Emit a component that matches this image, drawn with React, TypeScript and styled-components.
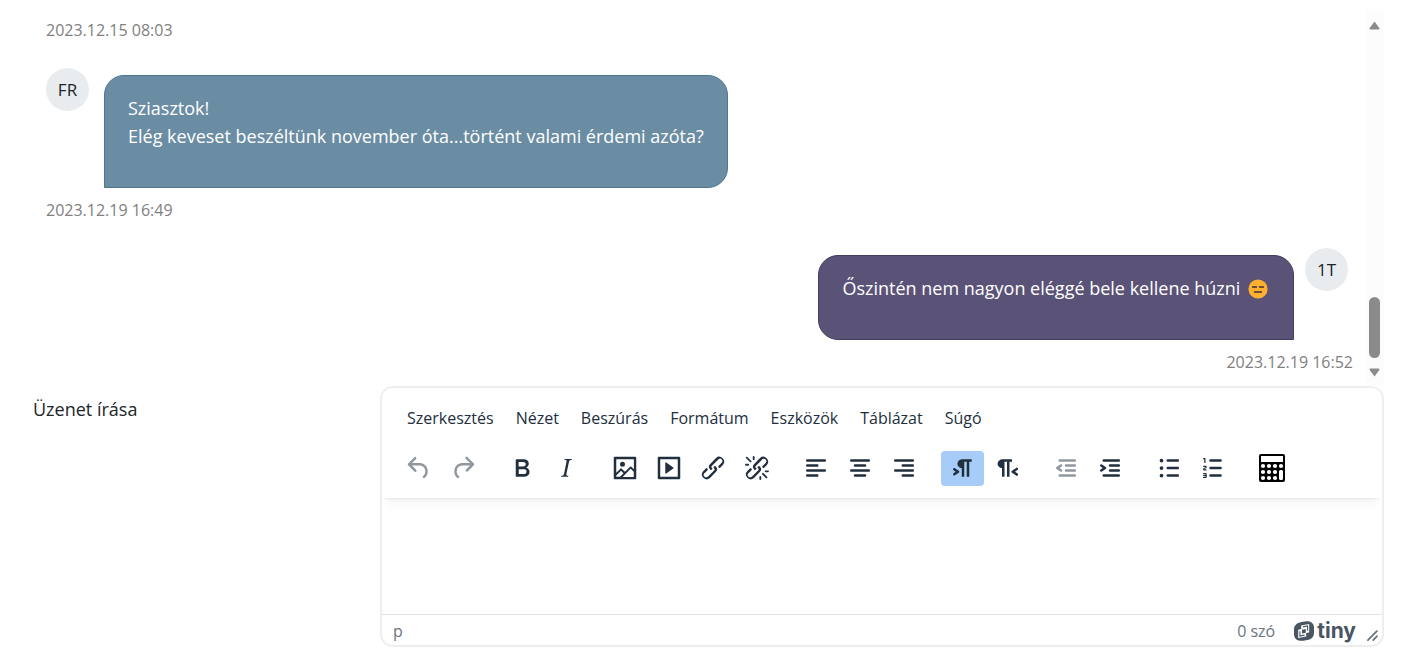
import React from 'react';
import styled, { createGlobalStyle } from 'styled-components';

const GlobalStyle = createGlobalStyle`
  *, *::before, *::after { box-sizing: border-box; }
  body {
    margin: 0;
    background: #fff;
    color: #212529;
    font-family: 'Open Sans', 'Noto Sans', sans-serif;
    font-size: 18px;
    line-height: 28px;
  }
  button, textarea { font: inherit; color: inherit; }
`;

const Page = styled.main`
  padding: 11px 17px 10px 33px;
`;

const Chat = styled.section`
  display: flex;
`;

const Messages = styled.div`
  flex: 1;
  min-width: 0;
  display: flex;
  flex-direction: column;
  gap: 24px;
  padding: 5px 13px 10px 13px;
`;

const Message = styled.article<{ $own?: boolean }>`
  display: flex;
  flex-direction: column;
  gap: 8px;
  align-items: ${(p) => (p.$own ? 'flex-end' : 'flex-start')};
`;

const MessageRow = styled.div<{ $own?: boolean }>`
  display: flex;
  align-items: flex-start;
  flex-direction: ${(p) => (p.$own ? 'row-reverse' : 'row')};
  gap: ${(p) => (p.$own ? '11px' : '15px')};
  padding-right: ${(p) => (p.$own ? '5px' : '0')};
`;

const Avatar = styled.div`
  flex: none;
  width: 43px;
  height: 43px;
  border-radius: 50%;
  background: #e9ecef;
  display: grid;
  place-items: center;
  font-size: 17px;
`;

const Bubble = styled.div<{ $own?: boolean }>`
  margin-top: 7px;
  padding: 18px 23px 37px;
  color: #fff;
  background: ${(p) => (p.$own ? '#5b5377' : '#6b8da4')};
  border: 1px solid ${(p) => (p.$own ? '#453d60' : '#4e7691')};
  border-radius: ${(p) => (p.$own ? '20px 20px 0 20px' : '20px 20px 20px 0')};
`;

const Paragraph = styled.p`
  margin: 0;
`;

const Emoji = styled.svg`
  width: 20px;
  height: 20px;
  margin: 0 2px 0 3px;
  vertical-align: -4px;
`;

const Time = styled.time`
  color: #808080;
  font-size: 16px;
`;

const Scrollbar = styled.div`
  width: 18px;
  background: #fcfcfc;
  display: flex;
  flex-direction: column;
  align-items: center;
  padding: 10px 1px 9px 0;
`;

const Arrow = styled.svg`
  width: 11px;
  height: 9px;
  fill: #8b8b8b;
`;

const Thumb = styled.div`
  width: 11px;
  height: 61px;
  margin: auto 0 10px;
  border-radius: 6px;
  background: #8b8b8b;
`;

const Compose = styled.section`
  display: flex;
  align-items: flex-start;
`;

const ComposeLabel = styled.label`
  flex: 0 0 347px;
  padding-top: 9px;
`;

const Editor = styled.div`
  flex: 1;
  min-width: 0;
  border: 2px solid #eee;
  border-radius: 13px;
  overflow: hidden;
`;

const EditorHeader = styled.header`
  position: relative;
  padding: 12px 15px 12px;
  background: #fff;
  box-shadow: 0 3px 3px -3px rgba(34, 47, 62, 0.15), 0 10px 10px -5px rgba(34, 47, 62, 0.06);
`;

const MenuBar = styled.nav`
  display: flex;
  gap: 2px;
`;

const MenuButton = styled.button`
  border: 0;
  background: none;
  padding: 0 10px;
  height: 36px;
  font-size: 16px;
  line-height: 36px;
  color: #222f3e;
`;

const Toolbar = styled.div`
  display: flex;
  gap: 16px;
  margin-top: 15px;
`;

const ToolGroup = styled.div`
  display: flex;
  gap: 1px;
`;

const ToolButton = styled.button<{ $active?: boolean }>`
  width: 43px;
  height: 35px;
  padding: 0 0 1px;
  border: 0;
  border-radius: 4px;
  display: grid;
  place-items: center;
  color: #222f3e;
  background: ${(p) => (p.$active ? '#a6ccf7' : 'transparent')};
  &:disabled { color: rgba(34, 47, 62, 0.5); }
`;

const Icon = styled.svg`
  width: 30px;
  height: 30px;
  fill: currentColor;
`;

const Content = styled.textarea`
  display: block;
  width: 100%;
  height: 116px;
  padding: 16px;
  border: 0;
  outline: 0;
  resize: none;
  background: #fff;
`;

const StatusBar = styled.footer`
  display: flex;
  align-items: center;
  height: 31px;
  padding: 2px 3px 0 11px;
  border-top: 1px solid #e3e3e3;
  color: #6b747f;
  font-size: 16px;
`;

const Path = styled.span`
  flex: 1;
`;

const Brand = styled.a`
  display: flex;
  align-items: center;
  gap: 3px;
  margin: 0 10px 0 19px;
  color: #4a5562;
  text-decoration: none;
  font-family: Inter, sans-serif;
  font-size: 21px;
  font-weight: 700;
  line-height: 24px;
`;

const BrandMark = styled.svg`
  width: 20px;
  height: 20px;
`;

const ResizeHandle = styled.svg`
  width: 13px;
  height: 13px;
  align-self: flex-end;
  margin-bottom: 3px;
  fill: #6b747f;
`;

const bar = 'c.6 0 1 .4 1 1s-.4 1-1 1';

const icons = {
  undo: 'M6.4 8H12c3.7 0 6.2 2 6.8 5.1.6 2.7-.4 5.6-2.3 6.8a1 1 0 0 1-1-1.8c1.1-.6 1.8-2.7 1.4-4.6-.5-2.1-2.1-3.5-4.9-3.5H6.4l3.3 3.3a1 1 0 1 1-1.4 1.4l-5-5a1 1 0 0 1 0-1.4l5-5a1 1 0 0 1 1.4 1.4L6.4 8Z',
  redo: 'M17.6 10H12c-2.8 0-4.4 1.4-4.9 3.5-.4 2 .3 4 1.4 4.6a1 1 0 1 1-1 1.8c-2-1.2-2.9-4.1-2.3-6.8.6-3 3-5.1 6.8-5.1h5.6l-3.3-3.3a1 1 0 1 1 1.4-1.4l5 5a1 1 0 0 1 0 1.4l-5 5a1 1 0 0 1-1.4-1.4l3.3-3.3Z',
  bold: 'M7.8 19c-.3 0-.5 0-.6-.2l-.2-.5V5.7c0-.2 0-.4.2-.5l.6-.2h5c1.5 0 2.7.3 3.5 1 .7.6 1.1 1.4 1.1 2.5a3 3 0 0 1-.6 1.9c-.4.6-1 1-1.6 1.2.4.1.9.3 1.3.6s.8.7 1 1.2c.4.4.5 1 .5 1.6 0 1.3-.4 2.3-1.3 3-.8.7-2.1 1-3.8 1H7.8Zm5-8.3c.6 0 1.2-.1 1.6-.5.4-.3.6-.7.6-1.3 0-1.1-.8-1.7-2.3-1.7H9.3v3.5h3.4Zm.5 6c.7 0 1.3-.1 1.7-.4.4-.4.6-.9.6-1.5s-.2-1-.7-1.4c-.4-.3-1-.4-2-.4H9.4v3.8h4Z',
  italic: 'm16.7 4.7-.1.9h-.3c-.6 0-1 0-1.4.3-.3.3-.4.6-.5 1.1l-2.1 9.8v.6c0 .5.4.8 1.4.8h.2l-.2.8H8l.2-.8h.2c1.1 0 1.8-.5 2-1.5l2-9.8.1-.5c0-.6-.4-.8-1.4-.8h-.3l.2-.9h5.8Z',
  image: 'm5 15.7 3.3-3.2c.3-.3.7-.3 1 0L12 15l4.1-4c.3-.4.8-.4 1 0l2 1.9V5H5v10.7ZM5 18V19h3l2.8-2.9-2-2L5 17.9Zm14-3-2.5-2.4-6.4 6.5H19v-4ZM4 3h16c.6 0 1 .4 1 1v16c0 .6-.4 1-1 1H4a1 1 0 0 1-1-1V4c0-.6.4-1 1-1Zm6 8a2 2 0 1 0 0-4 2 2 0 0 0 0 4Z',
  media: 'M4 3h16c.6 0 1 .4 1 1v16c0 .6-.4 1-1 1H4a1 1 0 0 1-1-1V4c0-.6.4-1 1-1Zm1 2v14h14V5H5Zm4.8 2.6 5.6 4a.5.5 0 0 1 0 .8l-5.6 4A.5.5 0 0 1 9 16V8a.5.5 0 0 1 .8-.4Z',
  link: 'M6.2 12.3a1 1 0 0 1 1.4 1.4l-2 2a2 2 0 1 0 2.6 2.8l4.8-4.8a1 1 0 0 0 0-1.4 1 1 0 1 1 1.4-1.3 2.9 2.9 0 0 1 0 4L9.6 20a3.9 3.9 0 0 1-5.5-5.5l2-2Zm11.6-.6a1 1 0 0 1-1.4-1.4l2-2a2 2 0 1 0-2.6-2.8L11 10.3a1 1 0 0 0 0 1.4A1 1 0 1 1 9.6 13a2.9 2.9 0 0 1 0-4L14.4 4a3.9 3.9 0 0 1 5.5 5.5l-2 2Z',
  unlink: 'M6.2 12.3a1 1 0 0 1 1.4 1.4l-2 2a2 2 0 1 0 2.6 2.8l4.8-4.8a1 1 0 0 0 0-1.4 1 1 0 1 1 1.4-1.3 2.9 2.9 0 0 1 0 4L9.6 20a3.9 3.9 0 0 1-5.5-5.5l2-2Zm11.6-.6a1 1 0 0 1-1.4-1.4l2.1-2a2 2 0 1 0-2.7-2.8L11 10.3a1 1 0 0 0 0 1.4A1 1 0 1 1 9.6 13a2.9 2.9 0 0 1 0-4L14.4 4a3.9 3.9 0 0 1 5.5 5.5l-2 2ZM7.6 6.3a.8.8 0 0 1-1 1.1L3.3 4.2a.7.7 0 1 1 1-1l3.2 3.1ZM5.1 8.6a.8.8 0 0 1 0 1.5H3a.8.8 0 0 1 0-1.5H5Zm5-3.5a.8.8 0 0 1-1.5 0V3a.8.8 0 0 1 1.5 0V5Zm6 11.8a.8.8 0 0 1 1-1l3.2 3.2a.8.8 0 0 1-1 1L16 17Zm-2.2 2a.8.8 0 0 1 1.5 0V21a.8.8 0 0 1-1.5 0V19Zm5-3.5a.7.7 0 1 1 0-1.5H21a.8.8 0 0 1 0 1.5H19Z',
  alignLeft: `M5 5h14${bar}H5a1 1 0 1 1 0-2Zm0 4h8${bar}H5a1 1 0 1 1 0-2Zm0 8h8${bar}H5a1 1 0 0 1 0-2Zm0-4h14${bar}H5a1 1 0 0 1 0-2Z`,
  alignCenter: `M5 5h14${bar}H5a1 1 0 1 1 0-2Zm3 4h8${bar}H8a1 1 0 1 1 0-2Zm0 8h8${bar}H8a1 1 0 0 1 0-2Zm-3-4h14${bar}H5a1 1 0 0 1 0-2Z`,
  alignRight: `M5 5h14${bar}H5a1 1 0 1 1 0-2Zm6 4h8${bar}h-8a1 1 0 0 1 0-2Zm0 8h8${bar}h-8a1 1 0 0 1 0-2Zm-6-4h14${bar}H5a1 1 0 0 1 0-2Z`,
  ltr: 'M11 5h8v2h-2v12h-2V7h-2v12h-2v-7c-.5 0-1 0-1.4-.3A3.4 3.4 0 0 1 7.8 10a3.3 3.3 0 0 1 0-2.8 3.4 3.4 0 0 1 1.8-1.8L11 5ZM4.4 16.2 6.2 15l-1.8-1.2a1 1 0 0 1 1.2-1.6l3 2a1 1 0 0 1 0 1.6l-3 2a1 1 0 1 1-1.2-1.6Z',
  rtl: 'M8 5h8v2h-2v12h-2V7h-2v12H8v-7c-.5 0-1 0-1.4-.3A3.4 3.4 0 0 1 4.8 10a3.3 3.3 0 0 1 0-2.8 3.4 3.4 0 0 1 1.8-1.8L8 5Zm12 11.2a1 1 0 1 1-1 1.6l-3-2a1 1 0 0 1 0-1.6l3-2a1 1 0 1 1 1 1.6L18.4 15l1.8 1.2Z',
  outdent: `M7 5h12${bar}H7a1 1 0 1 1 0-2Zm5 4h7${bar}h-7a1 1 0 0 1 0-2Zm0 4h7${bar}h-7a1 1 0 0 1 0-2Zm-5 4h12a1 1 0 0 1 0 2H7a1 1 0 0 1 0-2Zm1.6-3.8a1 1 0 0 1-1.2 1.6l-3-2a1 1 0 0 1 0-1.6l3-2a1 1 0 0 1 1.2 1.6L6.8 12l1.8 1.2Z`,
  indent: `M7 5h12${bar}H7a1 1 0 1 1 0-2Zm5 4h7${bar}h-7a1 1 0 0 1 0-2Zm0 4h7${bar}h-7a1 1 0 0 1 0-2Zm-5 4h12a1 1 0 0 1 0 2H7a1 1 0 0 1 0-2Zm-2.6-3.8L6.2 12l-1.8-1.2a1 1 0 0 1 1.2-1.6l3 2a1 1 0 0 1 0 1.6l-3 2a1 1 0 1 1-1.2-1.6Z`,
  bullets: `M11 5h8${bar}h-8a1 1 0 0 1 0-2Zm0 6h8${bar}h-8a1 1 0 0 1 0-2Zm0 6h8${bar}h-8a1 1 0 0 1 0-2ZM4.5 6a1.5 1.5 0 1 1 3 0 1.5 1.5 0 0 1-3 0Zm0 6a1.5 1.5 0 1 1 3 0 1.5 1.5 0 0 1-3 0Zm0 6a1.5 1.5 0 1 1 3 0 1.5 1.5 0 0 1-3 0Z`,
  numbers: `M10 17h8${bar}h-8a1 1 0 0 1 0-2Zm0-6h8${bar}h-8a1 1 0 0 1 0-2Zm0-6h8${bar}h-8a1 1 0 1 1 0-2ZM6 4v3.5c0 .3-.2.5-.5.5a.5.5 0 0 1-.5-.5V5h-.5a.5.5 0 0 1 0-1H6Zm-1 8.8.2.2h1.3c.3 0 .5.2.5.5s-.2.5-.5.5H4.9a1 1 0 0 1-.9-1V13c0-.4.3-.8.6-1l1.2-.4.2-.3a.2.2 0 0 0-.2-.2H4.5a.5.5 0 0 1-.5-.5c0-.3.2-.5.5-.5h1.6c.5 0 .9.4.9 1v.1c0 .4-.3.8-.6 1l-1.2.4-.2.3ZM7 17v2c0 .6-.4 1-1 1H4.5a.5.5 0 0 1 0-1h1.2c.2 0 .3-.1.3-.3 0-.2-.1-.3-.3-.3H4.4a.4.4 0 1 1 0-.8h1.3c.2 0 .3-.1.3-.3 0-.2-.1-.3-.3-.3H4.5a.5.5 0 1 1 0-1H6c.6 0 1 .4 1 1Z`,
};

type Tool = { icon: keyof typeof icons; label: string; disabled?: boolean; active?: boolean };

const toolGroups: Tool[][] = [
  [
    { icon: 'undo', label: 'Visszavonás', disabled: true },
    { icon: 'redo', label: 'Ismét', disabled: true },
  ],
  [
    { icon: 'bold', label: 'Félkövér' },
    { icon: 'italic', label: 'Dőlt' },
  ],
  [
    { icon: 'image', label: 'Kép' },
    { icon: 'media', label: 'Média' },
    { icon: 'link', label: 'Hivatkozás' },
    { icon: 'unlink', label: 'Hivatkozás törlése' },
  ],
  [
    { icon: 'alignLeft', label: 'Balra igazítás' },
    { icon: 'alignCenter', label: 'Középre igazítás' },
    { icon: 'alignRight', label: 'Jobbra igazítás' },
  ],
  [
    { icon: 'ltr', label: 'Balról jobbra', active: true },
    { icon: 'rtl', label: 'Jobbról balra' },
  ],
  [
    { icon: 'outdent', label: 'Behúzás csökkentése', disabled: true },
    { icon: 'indent', label: 'Behúzás növelése' },
  ],
  [
    { icon: 'bullets', label: 'Felsorolás' },
    { icon: 'numbers', label: 'Számozott lista' },
  ],
];

const menus = ['Szerkesztés', 'Nézet', 'Beszúrás', 'Formátum', 'Eszközök', 'Táblázat', 'Súgó'];

const CalculatorIcon = () => (
  <Icon viewBox="0 0 30 30" aria-hidden="true">
    <rect x="2" y="1" width="26" height="28" rx="2" fill="#000" />
    <rect x="4" y="3" width="22" height="6" fill="#fff" />
    {[13, 19, 25].map((y) =>
      [6, 12, 18].map((x) => <circle key={`${x}-${y}`} cx={x} cy={y} r="2.1" fill="#fff" />)
    )}
    <circle cx="24" cy="13" r="2.1" fill="#fff" />
    <rect x="22" y="17" width="4" height="10" rx="1.5" fill="#fff" />
  </Icon>
);

const ExpressionlessFace = () => (
  <Emoji viewBox="0 0 20 20" role="img" aria-label="kifejezéstelen arc">
    <circle cx="10" cy="10" r="9.6" fill="#ffb02e" />
    <path d="M4.5 8h4M11.5 8h4M6.5 13h7" stroke="#3b2a3c" strokeWidth="1.4" strokeLinecap="round" />
  </Emoji>
);

export default function App() {
  return (
    <>
      <GlobalStyle />
      <Page>
        <Chat>
          <Messages>
            <Time>2023.12.15 08:03</Time>
            <Message>
              <MessageRow>
                <Avatar>FR</Avatar>
                <Bubble>
                  <Paragraph>Sziasztok!</Paragraph>
                  <Paragraph>Elég keveset beszéltünk november óta...történt valami érdemi azóta?</Paragraph>
                </Bubble>
              </MessageRow>
              <Time>2023.12.19 16:49</Time>
            </Message>
            <Message $own>
              <MessageRow $own>
                <Avatar>1T</Avatar>
                <Bubble $own>
                  <Paragraph>
                    Őszintén nem nagyon eléggé bele kellene húzni <ExpressionlessFace />
                  </Paragraph>
                </Bubble>
              </MessageRow>
              <Time>2023.12.19 16:52</Time>
            </Message>
          </Messages>
          <Scrollbar aria-hidden="true">
            <Arrow viewBox="0 0 11 9">
              <path d="M5.5 0.5 10.3 7a1 1 0 0 1-.8 1.6h-8A1 1 0 0 1 .7 7Z" />
            </Arrow>
            <Thumb />
            <Arrow viewBox="0 0 11 9">
              <path d="M5.5 8.5 10.3 2a1 1 0 0 0-.8-1.6h-8A1 1 0 0 0 .7 2Z" />
            </Arrow>
          </Scrollbar>
        </Chat>
        <Compose>
          <ComposeLabel htmlFor="message">Üzenet írása</ComposeLabel>
          <Editor>
            <EditorHeader>
              <MenuBar>
                {menus.map((menu) => (
                  <MenuButton key={menu} type="button">{menu}</MenuButton>
                ))}
              </MenuBar>
              <Toolbar role="toolbar">
                {toolGroups.map((group) => (
                  <ToolGroup key={group[0].icon}>
                    {group.map((tool) => (
                      <ToolButton
                        key={tool.icon}
                        type="button"
                        aria-label={tool.label}
                        disabled={tool.disabled}
                        $active={tool.active}
                      >
                        <Icon viewBox="0 0 24 24" aria-hidden="true">
                          <path fillRule="evenodd" d={icons[tool.icon]} />
                        </Icon>
                      </ToolButton>
                    ))}
                  </ToolGroup>
                ))}
                <ToolGroup>
                  <ToolButton type="button" aria-label="Számológép">
                    <CalculatorIcon />
                  </ToolButton>
                </ToolGroup>
              </Toolbar>
            </EditorHeader>
            <Content id="message" />
            <StatusBar>
              <Path>p</Path>
              <span>0 szó</span>
              <Brand href="#tiny">
                <BrandMark viewBox="0 0 20 20" aria-hidden="true">
                  <path
                    fill="#4a5562"
                    d="M7.4 1 12.600.2C17 0 20 2.600 20 6.800v5.200c0 3.400-1.900 5.900-5.200 6.700l-5.400 1C4 20.400 0 18 0 13.200V8.200C0 4.300 3 1.800 7.400 1Z"
                  />
                  <path fill="#fff" d="M7.200 4.600l8-1.500v8.400l-3 .6v3.500l-8 1.500V8.700l3-.6Z" />
                  <path fill="#4a5562" d="M8 8.800l3.800-.7v3.600l-3.800.7Z" />
                  <path fill="none" stroke="#4a5562" strokeWidth="1.100" d="M5.900 10.200v4.800l4.600-.9M9 5.900l4.600-.9v4.800" />
                </BrandMark>
                tiny
              </Brand>
              <ResizeHandle viewBox="0 0 10 10" aria-hidden="true">
                <path d="M8.100 1.100A.5.5 0 1 1 9 2l-7 7A.5.5 0 1 1 1 8l7-7ZM8.100 5.100A.5.5 0 1 1 9 6l-3 3A.5.5 0 1 1 5 8l3-3Z" />
              </ResizeHandle>
            </StatusBar>
          </Editor>
        </Compose>
      </Page>
    </>
  );
}
